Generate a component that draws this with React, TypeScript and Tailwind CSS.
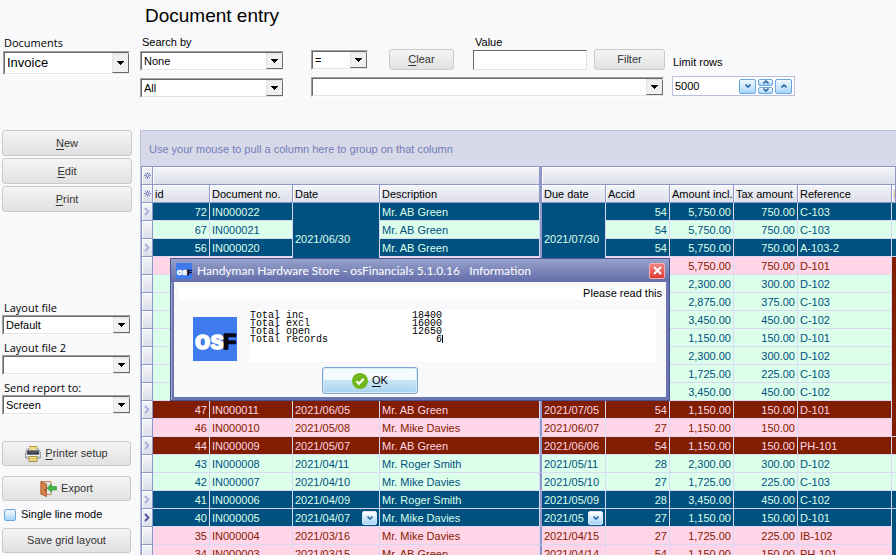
import React from "react";

type Tone = "blue" | "green" | "pink" | "brown";

type Row = {
  id: string;
  doc: string;
  tone: Tone;
  date?: string;
  name: string;
  due?: string;
  acc: string;
  amount: string;
  tax: string;
  reference: string;
  span?: number;
  merged?: boolean;
  current?: boolean;
  edge?: { tone: Tone; rows: number };
};

const tones: Record<Tone, string> = {
  blue: "bg-[#00517f] text-[#dcffec]",
  green: "bg-[#dcffec] text-[#00517f]",
  pink: "bg-[#ffd5e7] text-[#862000]",
  brown: "bg-[#821e00] text-[#ffd5e7]",
};

const blank = { id: "", doc: "", date: "", name: "", due: "", acc: "" };

const rows: Row[] = [
  { id: "72", doc: "IN000022", tone: "blue", date: "2021/06/30", name: "Mr. AB Green", due: "2021/07/30", acc: "54", amount: "5,750.00", tax: "750.00", reference: "C-103", span: 4, edge: { tone: "blue", rows: 1 } },
  { id: "67", doc: "IN000021", tone: "green", name: "Mr. AB Green", acc: "54", amount: "5,750.00", tax: "750.00", reference: "C-103", merged: true, edge: { tone: "green", rows: 1 } },
  { id: "56", doc: "IN000020", tone: "blue", name: "Mr. AB Green", acc: "54", amount: "5,750.00", tax: "750.00", reference: "A-103-2", merged: true, edge: { tone: "blue", rows: 1 } },
  { ...blank, tone: "pink", amount: "5,750.00", tax: "750.00", reference: "D-101", merged: true, edge: { tone: "brown", rows: 10 } },
  { ...blank, tone: "green", amount: "2,300.00", tax: "300.00", reference: "D-102" },
  { ...blank, tone: "green", amount: "2,875.00", tax: "375.00", reference: "C-103" },
  { ...blank, tone: "green", amount: "3,450.00", tax: "450.00", reference: "C-102" },
  { ...blank, tone: "green", amount: "1,150.00", tax: "150.00", reference: "D-101" },
  { ...blank, tone: "green", amount: "2,300.00", tax: "300.00", reference: "D-102" },
  { ...blank, tone: "green", amount: "1,725.00", tax: "225.00", reference: "C-103" },
  { ...blank, tone: "green", amount: "3,450.00", tax: "450.00", reference: "C-102" },
  { id: "47", doc: "IN000011", tone: "brown", date: "2021/06/05", name: "Mr. AB Green", due: "2021/07/05", acc: "54", amount: "1,150.00", tax: "150.00", reference: "D-101" },
  { id: "46", doc: "IN000010", tone: "pink", date: "2021/05/08", name: "Mr. Mike Davies", due: "2021/06/07", acc: "27", amount: "1,150.00", tax: "150.00", reference: "" },
  { id: "44", doc: "IN000009", tone: "brown", date: "2021/05/07", name: "Mr. AB Green", due: "2021/06/06", acc: "54", amount: "1,150.00", tax: "150.00", reference: "PH-101", edge: { tone: "brown", rows: 1 } },
  { id: "43", doc: "IN000008", tone: "green", date: "2021/04/11", name: "Mr. Roger Smith", due: "2021/05/11", acc: "28", amount: "2,300.00", tax: "300.00", reference: "D-102", edge: { tone: "green", rows: 1 } },
  { id: "42", doc: "IN000007", tone: "green", date: "2021/04/10", name: "Mr. Mike Davies", due: "2021/05/10", acc: "27", amount: "1,725.00", tax: "225.00", reference: "C-103", edge: { tone: "green", rows: 1 } },
  { id: "41", doc: "IN000006", tone: "blue", date: "2021/04/09", name: "Mr. Roger Smith", due: "2021/05/09", acc: "28", amount: "3,450.00", tax: "450.00", reference: "C-102", edge: { tone: "blue", rows: 1 } },
  { id: "40", doc: "IN000005", tone: "blue", date: "2021/04/07", name: "Mr. Mike Davies", due: "2021/05", acc: "27", amount: "1,150.00", tax: "150.00", reference: "D-101", current: true, edge: { tone: "blue", rows: 3 } },
  { id: "35", doc: "IN000004", tone: "pink", date: "2021/03/16", name: "Mr. Mike Davies", due: "2021/04/15", acc: "27", amount: "1,725.00", tax: "225.00", reference: "IB-102" },
  { id: "34", doc: "IN000003", tone: "pink", date: "2021/03/15", name: "Mr. AB Green", due: "2021/04/14", acc: "54", amount: "1,150.00", tax: "150.00", reference: "PH-101" },
];

const sans = "font-['Liberation_Sans',Arial,sans-serif]";
const humanist = "font-['Open_Sans','Noto_Sans',sans-serif]";

function Combo({ id, label, value, className, textClass = "text-[11px]" }: { id: string; label?: string; value: string; className: string; textClass?: string }) {
  return (
    <div className={`relative border border-t-[#a0a0a0] border-l-[#a0a0a0] border-r-white border-b-white ${className}`}>
      <select
        id={id}
        aria-label={label}
        className={`block h-full w-full appearance-none border border-t-[#696969] border-l-[#696969] border-r-[#e3e3e3] border-b-[#e3e3e3] bg-white pl-0.5 text-black outline-none ${sans} ${textClass}`}
      >
        <option>{value}</option>
      </select>
      <span className="pointer-events-none absolute inset-y-px right-0 flex w-[17px] items-center justify-center border border-t-[#e3e3e3] border-l-[#e3e3e3] border-r-[#696969] border-b-[#696969] bg-[#f0f0f0]">
        <svg width="7" height="4" viewBox="0 0 7 4" shapeRendering="crispEdges" aria-hidden="true">
          <path d="M0 0h7v1H0zM1 1h5v1H1zM2 2h3v1H2zM3 3h1v1H3z" />
        </svg>
      </span>
    </div>
  );
}

function Button({ children, className }: { children: React.ReactNode; className: string }) {
  return (
    <button
      type="button"
      className={`flex items-center justify-center rounded-[3px] border border-[#c9c9cb] bg-linear-to-b from-[#f5f5f5] to-[#e1e1e1] text-[11px] text-[#333] ${className}`}
    >
      {children}
    </button>
  );
}

function Key({ children }: { children: string }) {
  return <span className="underline underline-offset-2">{children}</span>;
}

function PrinterIcon() {
  return (
    <svg width="16" height="16" viewBox="0 0 16 16" aria-hidden="true">
      <path d="M4.500 0.500h7.500v5H4.500z" fill="#efdc8a" stroke="#b19c4e" />
      <path d="M1.500 4 3 2.500h10L14.500 4l1 3.500v4.500H.5V7.500z" fill="#c4c7cc" stroke="#8b8f95" strokeWidth="0.800" />
      <path d="M4.500 1h7v3h-7z" fill="#efdc8a" />
      <path d="M2.500 4.500h11L14 8.500H2z" fill="#34383e" />
      <path d="M4 6h8" stroke="#6e757c" />
      <path d="M1 9.500h14" stroke="#eef0f2" />
      <path d="M4 10.500h8v5H4z" fill="#f2e08e" stroke="#a9933f" />
      <path d="M5.500 13h5" stroke="#d1b85a" />
    </svg>
  );
}

function ExportIcon() {
  return (
    <svg width="17" height="16" viewBox="0 0 17 16" aria-hidden="true">
      <path d="M1 .5h10v13H1z" fill="#dfe7ec" stroke="#c98a56" />
      <path d="M1 .5 6.500 3v12.500L1 13z" fill="#d5834a" stroke="#ad6233" />
      <path d="M5 8v2" stroke="#5d2f12" />
      <path d="M7 7 11.500 3v2.500h5v3.500h-5v2.500z" fill="#43b649" stroke="#2f9838" strokeWidth="0.600" />
    </svg>
  );
}

function Chevron({ up = false }: { up?: boolean }) {
  return (
    <svg width="6" height="4" viewBox="0 0 6 4" aria-hidden="true">
      <path d={up ? "M0.500 3.500 3 1l2.500 2.500" : "M0.500 0.500 3 3l2.500-2.500"} fill="none" stroke="#2767a8" strokeWidth="1.600" />
    </svg>
  );
}

const glossy = "border border-[#69a5dc] bg-linear-to-b from-[#eef7fe] via-[#d2e9fb] to-[#a6d3f7]";

function CellDrop({ label }: { label: string }) {
  return (
    <button type="button" aria-label={label} className="flex h-3.5 w-[15px] shrink-0 items-center justify-center rounded-xs border border-[#d6eafa] bg-linear-to-b from-white to-[#a6d3f7]">
      <Chevron />
    </button>
  );
}

function Star() {
  return (
    <svg className="mx-auto block" width="7" height="7" viewBox="0 0 7 7" aria-hidden="true">
      <path d="M3.500 0v7M0 3.500h7M1 1l5 5M6 1 1 6" stroke="#6f79b4" strokeWidth="0.900" fill="none" />
      <circle cx="3.500" cy="3.500" r="1" fill="#eceef5" />
    </svg>
  );
}

function Mark({ current }: { current?: boolean }) {
  return (
    <svg className="mx-auto block" width="6" height="9" viewBox="0 0 6 9" aria-hidden="true">
      <path d="M1 1l3.500 3.500L1 8" stroke={current ? "#4a559f" : "#a9afd8"} strokeWidth="1.800" fill="none" />
    </svg>
  );
}

function OsfLogo({ className }: { className: string }) {
  return (
    <svg className={className} viewBox="0 0 44 44" role="img" aria-label="osF">
      <rect width="44" height="44" fill="#3f7bee" />
      <g fontFamily="'Liberation Sans', Arial, sans-serif" fontWeight="bold" strokeWidth="1.600" strokeLinejoin="round">
        <text x="2" y="32" fontSize="25" fill="#fff" stroke="#fff">os</text>
        <text x="30" y="32" fontSize="22" fill="#0a0a14" stroke="#0a0a14">F</text>
      </g>
    </svg>
  );
}

const head = "border-r border-b border-[#8e97c7] bg-linear-to-b from-[#f5f5fa] to-[#dcdee9] p-0 shadow-[inset_1px_1px_0_#fff]";
const line = "border-r border-b border-[#d8d9f2] py-0 leading-4 whitespace-nowrap";

function Grid() {
  return (
    <table className="w-full table-fixed border-separate border-spacing-0 border-l border-[#8e97c7] text-[11px]">
      <colgroup>
        <col className="w-[11px]" />
        <col className="w-[57px]" />
        <col className="w-[83px]" />
        <col className="w-[87px]" />
        <col className="w-[160px]" />
        <col className="w-[66px]" />
        <col className="w-[64px]" />
        <col className="w-[64px]" />
        <col className="w-[64px]" />
        <col className="w-[94px]" />
        <col />
      </colgroup>
      <thead className="text-left text-black">
        <tr className="h-[19px]">
          <td className={`${head} border-t`}><Star /></td>
          <td colSpan={4} className={`${head} border-t`} />
          <td colSpan={6} className={`${head} border-t border-l-2`} />
        </tr>
        <tr className="h-[18px] leading-4">
          <td className={head}><Star /></td>
          {["id", "Document no.", "Date", "Description", "Due date", "Accid", "Amount incl.", "Tax amount", "Reference", "P"].map((title) => (
            <th key={title} scope="col" className={`${head} overflow-hidden pl-0.5 font-normal whitespace-nowrap ${title === "Due date" ? "border-l-2" : ""}`}>
              {title}
            </th>
          ))}
        </tr>
      </thead>
      <tbody>
        {rows.map((row, index) => {
          const tone = tones[row.tone];
          const dark = row.tone === "blue" || row.tone === "brown";
          return (
            <tr key={index} className="h-[18px]">
              <td className={head}>{dark && <Mark current={row.current} />}</td>
              <td className={`${line} ${tone} pr-0.5 text-right`}>{row.id}</td>
              <td className={`${line} ${tone} pl-0.5`}>{row.doc}</td>
              {!row.merged && (
                <td rowSpan={row.span} className={`${line} ${tone} pr-0.5 pl-0.5`}>
                  <div className="flex items-center justify-between">
                    {row.date}
                    {row.current && <CellDrop label="Choose date" />}
                  </div>
                </td>
              )}
              <td className={`${line} ${tone} pl-0.5`}>{row.name}</td>
              {!row.merged && (
                <td rowSpan={row.span} className={`${line} ${tone} border-l-2 border-l-[#8e97c7] pr-0.5 pl-0.5`}>
                  <div className="flex items-center justify-between">
                    {row.due}
                    {row.current && <CellDrop label="Choose due date" />}
                  </div>
                </td>
              )}
              <td className={`${line} ${tone} pr-0.5 text-right`}>{row.acc}</td>
              <td className={`${line} ${tone} pr-0.5 text-right`}>{row.amount}</td>
              <td className={`${line} ${tone} pr-0.5 text-right`}>{row.tax}</td>
              <td className={`${line} ${tone} pl-0.5`}>{row.reference}</td>
              {row.edge && <td rowSpan={row.edge.rows} className={`border-b border-[#d8d9f2] p-0 ${tones[row.edge.tone]}`} />}
            </tr>
          );
        })}
      </tbody>
    </table>
  );
}

const report = [
  "Total inc                  18400",
  "Total excl                 16000",
  "Total open                 12650",
  "Total records                  6",
].join("\n");

function InfoDialog() {
  return (
    <section
      role="dialog"
      aria-labelledby="dialog-title"
      className="absolute top-[258px] left-[170px] flex h-[143px] w-[500px] flex-col border border-[#48538f] bg-[#6a76b2] px-[3px] pb-[3px] shadow-[inset_1px_1px_0_#a4acd4]"
    >
      <header className="-mx-[3px] flex h-[23px] shrink-0 items-center bg-linear-to-b from-[#98a1cb] to-[#626da9] pr-1 pl-[5px]">
        <OsfLogo className="size-4" />
        <h2 id="dialog-title" className="ml-[5px] flex-1 font-[Lato,'Open_Sans',sans-serif] text-xs whitespace-pre text-white">
          {"Handyman Hardware Store - osFinancials 5.1.0.16   Information"}
        </h2>
        <button type="button" aria-label="Close" className="flex size-4 items-center justify-center rounded-xs border border-[#f7b0ac] bg-linear-to-b from-[#f0807c] to-[#e03530]">
          <svg width="9" height="9" viewBox="0 0 9 9" aria-hidden="true">
            <path d="M1 1l7 7M8 1 1 8" stroke="#fff" strokeWidth="2.200" />
          </svg>
        </button>
      </header>
      <div className="flex flex-1 flex-col bg-[#f9f9fc] pt-[5px] pr-1 pl-[5px]">
        <p className="h-[13px] bg-white text-right text-[11px] leading-[13px] text-black">Please read this</p>
        <div className="mt-2.5 mr-1.5 ml-3.5 flex items-start">
          <OsfLogo className="mt-[7px] size-11 shrink-0" />
          <div className="relative ml-3 h-[52px] flex-1">
            <textarea
              readOnly
              aria-label="Totals"
              defaultValue={report}
              className="block h-full w-full resize-none overflow-hidden border-0 bg-white pt-0.5 pl-px font-['Liberation_Mono',monospace] text-[10px] leading-2 whitespace-pre text-black outline-none"
            />
            <span className="absolute top-[25px] left-[193px] h-2 w-px bg-black" />
          </div>
        </div>
        <button type="button" className="mt-[5px] ml-[143px] flex h-[27px] w-24 items-center justify-center gap-1 rounded-[3px] border border-[#7ba4cf] bg-linear-to-b from-[#f4fafd] from-45% via-[#c9e4f5] via-50% to-[#a9d3ee] text-[11px] text-black shadow-[inset_0_0_0_1px_#d8ecf8]">
          <svg width="16" height="16" viewBox="0 0 16 16" aria-hidden="true">
            <circle cx="8" cy="8" r="8" fill="#6fb81c" />
            <path d="M4.500 8.200 7 10.700l4.700-4.900" stroke="#fff" strokeWidth="2.200" fill="none" />
          </svg>
          <span><Key>O</Key>K</span>
        </button>
      </div>
    </section>
  );
}

export default function App() {
  return (
    <div className={`relative flex h-screen overflow-hidden bg-[#f9f9fc] text-black ${sans}`}>
      <aside className="flex w-[140px] shrink-0 flex-col pr-2 pl-0.5">
        <label htmlFor="documents" className={`mt-[35px] mb-px pl-0.5 text-[11px] leading-[15px] ${humanist}`}>Documents</label>
        <Combo id="documents" value="Invoice" className="mr-0.5 ml-px h-6" textClass="text-[13px]" />

        <div className="mt-[55px] flex flex-col gap-0.5">
          <Button className="h-[26px]"><span><Key>N</Key>ew</span></Button>
          <Button className="h-[26px]"><span><Key>E</Key>dit</span></Button>
          <Button className="h-[26px]"><span><Key>P</Key>rint</span></Button>
        </div>

        <div className={`mt-[89px] mr-px flex flex-col text-[11px] leading-[14px] ${humanist}`}>
          <label htmlFor="layout1" className="pl-0.5">Layout file</label>
          <Combo id="layout1" value="Default" className="h-5" />
          <label htmlFor="layout2" className="mt-1.5 pl-0.5">Layout file 2</label>
          <Combo id="layout2" value="" className="h-5" />
          <label htmlFor="report" className="mt-1.5 pl-0.5">Send report to:</label>
          <Combo id="report" value="Screen" className="h-5" />
        </div>

        <div className="mr-px flex flex-col pt-[26px]">
          <Button className="h-[25px] gap-1"><PrinterIcon /><span><Key>P</Key>rinter setup</span></Button>
          <Button className="mt-2.5 h-[25px] gap-1"><ExportIcon />Export</Button>
          <label className="mt-[7px] flex h-[13px] items-center gap-[5px] pl-0.5 text-[11px]">
            <input type="checkbox" className={`size-3 appearance-none rounded-xs ${glossy}`} />
            Single line mode
          </label>
          <Button className="mt-[7px] h-[25px]">Save grid layout</Button>
        </div>
      </aside>

      <main className="flex min-w-0 flex-1 flex-col">
        <div className="h-[130px] shrink-0">
          <h1 className="pt-1 pl-[5px] text-[19px] leading-6">Document entry</h1>
          <div className="flex pt-[7px] text-[11px]">
            <div className="flex w-36 flex-col pt-px">
              <label htmlFor="search" className="pb-0.5 pl-0.5 leading-[13px]">Search by</label>
              <Combo id="search" value="None" className="h-5" />
              <Combo id="scope" label="Search scope" value="All" className="mt-[7px] h-5" />
            </div>
            <div className="ml-[27px] flex w-[354px] flex-col">
              <div className="flex items-end">
                <Combo id="operator" label="Operator" value="=" className="h-5 w-[57px]" />
                <Button className="ml-[21px] h-[21px] w-[65px]"><span><Key>C</Key>lear</span></Button>
                <div className="ml-[19px] flex w-[114px] flex-col">
                  <label htmlFor="value" className="pl-0.5 leading-[15px]">Value</label>
                  <input id="value" className="h-5 w-full border border-t-[#696969] border-l-[#696969] border-r-[#e3e3e3] border-b-[#e3e3e3] bg-white px-1 outline-none" />
                </div>
                <Button className="ml-[7px] h-[21px] w-[71px]">Filter</Button>
              </div>
              <Combo id="list" label="Search value" value="" className="mt-[7px] mr-px h-5" />
            </div>
            <div className="ml-[7px] flex w-[123px] flex-col pt-5">
              <label htmlFor="limit" className="pl-px leading-[15px]">Limit rows</label>
              <div className="mt-1.5 flex h-5 items-center gap-0.5 border border-[#b9bfdd] bg-white pr-0.5">
                <input id="limit" defaultValue="5000" className="h-full w-0 min-w-0 flex-1 bg-white pl-0.5 outline-none" />
                <button type="button" aria-label="Lowest" className={`flex h-[15px] w-[17px] items-center justify-center rounded-xs ${glossy}`}><Chevron /></button>
                <span className="flex w-[15px] flex-col gap-px">
                  <button type="button" aria-label="Up" className={`flex h-[7px] items-center justify-center rounded-xs ${glossy}`}><Chevron up /></button>
                  <button type="button" aria-label="Down" className={`flex h-[7px] items-center justify-center rounded-xs ${glossy}`}><Chevron /></button>
                </span>
                <button type="button" aria-label="Highest" className={`flex h-[15px] w-[17px] items-center justify-center rounded-xs ${glossy}`}><Chevron up /></button>
              </div>
            </div>
          </div>
        </div>

        <div className="flex-1 border-t border-l border-[#b9bfdd] bg-[#d7d9e8]">
          <p className="h-[35px] pl-2 text-[11px] leading-9 text-[#727db8]">Use your mouse to pull a column here to group on that column</p>
          <Grid />
        </div>
      </main>

      <InfoDialog />
    </div>
  );
}
